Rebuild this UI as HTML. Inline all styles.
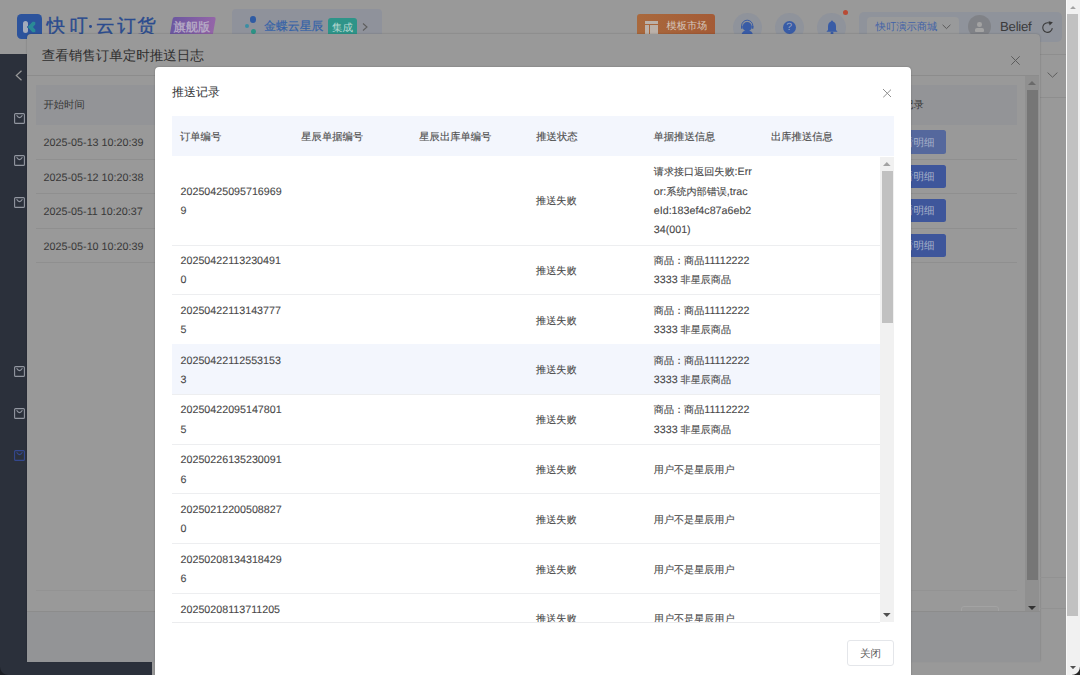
<!DOCTYPE html>
<html><head><meta charset="utf-8">
<style>
*{margin:0;padding:0;box-sizing:border-box}
html,body{width:1080px;height:675px;overflow:hidden}
body{position:relative;background:#999;font-family:"Liberation Sans",sans-serif;color:#333;text-rendering:geometricPrecision}
.a{position:absolute}
.t{position:absolute;white-space:nowrap;line-height:1}
.brand{top:17px;font-size:18.5px;-webkit-text-stroke:.4px #2a4b8e;color:#2a4b8e}
.m1d{font-size:10.75px;color:#383838}
#tb{position:absolute;left:172px;top:156.5px;width:708px;height:465.5px;overflow:hidden}
.r{display:flex;border-bottom:1px solid #edeef0;background:#fff}
.r.hov{background:#f3f6fd}
.r.pre{border-bottom-color:#f3f6fd}
.z{font-size:10.1px}
.in{position:relative;top:1.6px}
.c{width:118px;padding:0 9px 0 8.6px;line-height:19.35px;font-size:10.7px;color:#484848;-webkit-text-stroke:.1px #484848;display:flex;flex-direction:column;justify-content:center;white-space:nowrap}
.hc{position:absolute;top:132.6px;font-size:10.3px;-webkit-text-stroke:.15px #555;line-height:1;color:#505050;white-space:nowrap}
</style></head>
<body>
<!-- ===== base page (dimmed) ===== -->
<div class="a" id="hdr" style="left:0;top:0;width:1066px;height:54px;background:#999"></div>
<!-- logo -->
<div class="a" style="left:17px;top:14.2px;width:25.3px;height:25px;border-radius:4.5px;background:#2c539c"></div>
<div class="a" style="left:22.9px;top:20.8px;width:5.4px;height:12.1px;border-radius:2.7px;background:#a4abbb"></div>
<svg class="a" style="left:25px;top:20px" width="13" height="14" viewBox="0 0 13 14"><path d="M9 1.2 Q11.8 1.8 10.6 4.6 L8.4 7 L10.6 9.4 Q11.8 12.2 9 12.8 Q7.6 12.9 6.4 11.4 L2.2 7 L6.4 2.6 Q7.6 1.1 9 1.2Z" fill="#2a8a96" stroke="#2c539c" stroke-width=".8"/></svg>
<div class="t brand" style="left:46.5px">快</div>
<div class="t brand" style="left:69.2px">叮</div>
<div class="t brand" style="left:96.1px">云</div>
<div class="t brand" style="left:117.3px">订</div>
<div class="t brand" style="left:137.2px">货</div>
<div class="a" style="left:89.2px;top:25.2px;width:2.8px;height:2.8px;border-radius:50%;background:#2a4b8e"></div>
<div class="a" style="left:170.5px;top:16.8px;width:43px;height:22px;background:linear-gradient(90deg,#6c57a0,#9465a8);transform:skewX(-10deg);border-radius:2px"></div>
<div class="t" style="left:173.6px;top:21px;font-size:12.2px;-webkit-text-stroke:.3px #b8aec6;color:#b8aec6">旗舰版</div>
<!-- kingdee pill -->
<div class="a" style="left:232px;top:9.4px;width:150px;height:30px;border-radius:4px;background:#8f929b"></div>
<div class="a" style="left:249.9px;top:16.1px;width:6.6px;height:6.6px;border-radius:50%;background:#2f5ba3"></div>
<div class="a" style="left:244.8px;top:24.2px;width:4px;height:4px;border-radius:50%;background:#3a8ea3"></div>
<div class="a" style="left:250.8px;top:28.7px;width:5.4px;height:5.4px;border-radius:50%;background:#2b9385"></div>
<div class="t" style="left:264px;top:20.6px;font-size:11.9px;-webkit-text-stroke:.2px #3462a8;color:#3462a8">金蝶云星辰</div>
<div class="a" style="left:328.3px;top:17.6px;width:28.3px;height:20px;border-radius:3px;background:#2e9489"></div>
<div class="t" style="left:332px;top:22.5px;font-size:10.5px;color:#b9d9d2">集成</div>
<svg class="a" style="left:361.5px;top:22.5px" width="6" height="8" viewBox="0 0 6 8"><path d="M1 .5L5 4L1 7.5" fill="none" stroke="#5e5e5e" stroke-width="1.1"/></svg>
<!-- orange btn -->
<div class="a" style="left:637.1px;top:14px;width:78.3px;height:26px;border-radius:3px;background:linear-gradient(90deg,#a9693d,#a45b36)"></div>
<div class="a" style="left:645.4px;top:20.9px;width:12.5px;height:2.9px;background:#bbb1a9"></div>
<div class="a" style="left:645.4px;top:24.6px;width:3.2px;height:10px;background:#bbb1a9"></div>
<div class="a" style="left:649.6px;top:24.6px;width:8.3px;height:10px;background:#bbb1a9"></div>
<div class="t" style="left:666.5px;top:22.3px;font-size:10.2px;color:#d5c7bd">模板市场</div>
<!-- circles -->
<div class="a" style="left:732.8px;top:12.8px;width:28.8px;height:28.8px;border-radius:50%;background:#8f939b"></div>
<div class="a" style="left:774.9px;top:12.8px;width:28.8px;height:28.8px;border-radius:50%;background:#8f939b"></div>
<div class="a" style="left:817px;top:12.8px;width:28.8px;height:28.8px;border-radius:50%;background:#8f939b"></div>
<svg class="a" style="left:739px;top:19px" width="17" height="16" viewBox="0 0 17 16"><circle cx="8.2" cy="7.7" r="4.6" fill="#395ca6"/><path d="M2.6 8.5 V6.8 A5.6 5.6 0 0 1 13.8 6.8 V8.5" fill="none" stroke="#395ca6" stroke-width="1"/><rect x="2" y="6.8" width="1.6" height="3" rx=".6" fill="#395ca6"/><rect x="12.8" y="6.8" width="1.6" height="3" rx=".6" fill="#395ca6"/><path d="M2.5 16 Q3 11.6 8.2 11.6 Q13.4 11.6 13.9 16Z" fill="#395ca6"/></svg>
<div class="a" style="left:782.8px;top:20.5px;width:13px;height:13px;border-radius:50%;background:#395ca6"></div>
<div class="t" style="left:786.2px;top:22px;font-size:10.5px;color:#9aa6c2">?</div>
<svg class="a" style="left:825.5px;top:20px" width="12" height="15" viewBox="0 0 12 15"><path d="M6 .6 Q6.9 .6 7 1.6 Q10 2.6 10 6.5 V10 L11.6 11.8 H.4 L2 10 V6.5 Q2 2.6 5 1.6 Q5.1 .6 6 .6Z" fill="#395ca6"/><circle cx="6" cy="13" r="1.5" fill="#395ca6"/></svg>
<div class="a" style="left:842.7px;top:10.2px;width:5.2px;height:5.2px;border-radius:50%;background:#b84b35"></div>
<!-- user pill -->
<div class="a" style="left:859.3px;top:12.2px;width:203px;height:29.5px;border-radius:5px;background:#8f939b"></div>
<div class="a" style="left:867.4px;top:17px;width:91.9px;height:22px;border-radius:4px;background:#999a9b"></div>
<div class="t" style="left:875.6px;top:23px;font-size:10.3px;color:#4262a8">快叮演示商城</div>
<svg class="a" style="left:941.5px;top:24px" width="9" height="6" viewBox="0 0 9 6"><path d="M.6 .8L4.5 4.6L8.4 .8" fill="none" stroke="#5a5a5a" stroke-width="1"/></svg>
<div class="a" style="left:968.1px;top:14.7px;width:23px;height:23px;border-radius:50%;background:#808287"></div>
<div class="a" style="left:977.3px;top:22px;width:4.6px;height:4.6px;border-radius:50%;background:#a3a3a3"></div>
<div class="a" style="left:974.6px;top:27.9px;width:9.7px;height:3.8px;border-radius:2px 2px 1px 1px;background:#a3a3a3"></div>
<div class="t" style="left:1000px;top:20.2px;font-size:13.2px;letter-spacing:-.25px;color:#3b3b3b">Belief</div>
<svg class="a" style="left:1040.5px;top:20.5px" width="13" height="13" viewBox="0 0 13 13"><path d="M11.3 7.2 A4.8 4.8 0 1 1 8.4 2.1" fill="none" stroke="#3a3a3a" stroke-width="1.1"/><path d="M7.6 .2 L11.9 1.2 L8.6 4.4Z" fill="#3a3a3a"/></svg>

<!-- sidebar -->
<div class="a" id="side" style="left:0;top:54px;width:152px;height:621px;background:#2b303b"></div>
<svg class="a" style="left:14px;top:112.7px" width="11" height="11" viewBox="0 0 11 11"><rect x="0.6" y="0.6" width="9.8" height="9.8" rx="1" fill="none" stroke="#9296a0" stroke-width="1.1"/><path d="M2.6 2.3 Q5.5 7 8.4 2.3" fill="none" stroke="#9296a0" stroke-width="1.1"/></svg>
<svg class="a" style="left:14px;top:155.1px" width="11" height="11" viewBox="0 0 11 11"><rect x="0.6" y="0.6" width="9.8" height="9.8" rx="1" fill="none" stroke="#9296a0" stroke-width="1.1"/><path d="M2.6 2.3 Q5.5 7 8.4 2.3" fill="none" stroke="#9296a0" stroke-width="1.1"/></svg>
<svg class="a" style="left:14px;top:196.9px" width="11" height="11" viewBox="0 0 11 11"><rect x="0.6" y="0.6" width="9.8" height="9.8" rx="1" fill="none" stroke="#9296a0" stroke-width="1.1"/><path d="M2.6 2.3 Q5.5 7 8.4 2.3" fill="none" stroke="#9296a0" stroke-width="1.1"/></svg>
<svg class="a" style="left:14px;top:365.7px" width="11" height="11" viewBox="0 0 11 11"><rect x="0.6" y="0.6" width="9.8" height="9.8" rx="1" fill="none" stroke="#9296a0" stroke-width="1.1"/><path d="M2.6 2.3 Q5.5 7 8.4 2.3" fill="none" stroke="#9296a0" stroke-width="1.1"/></svg>
<svg class="a" style="left:14px;top:407.8px" width="11" height="11" viewBox="0 0 11 11"><rect x="0.6" y="0.6" width="9.8" height="9.8" rx="1" fill="none" stroke="#9296a0" stroke-width="1.1"/><path d="M2.6 2.3 Q5.5 7 8.4 2.3" fill="none" stroke="#9296a0" stroke-width="1.1"/></svg>
<svg class="a" style="left:14px;top:450.1px" width="11" height="11" viewBox="0 0 11 11"><rect x="0.6" y="0.6" width="9.8" height="9.8" rx="1" fill="none" stroke="#34488f" stroke-width="1.1"/><path d="M2.6 2.3 Q5.5 7 8.4 2.3" fill="none" stroke="#34488f" stroke-width="1.1"/></svg>
<svg class="a" style="left:15px;top:69.5px" width="8" height="11" viewBox="0 0 8 11"><path d="M6.5 .8L1.3 5.5L6.5 10.2" fill="none" stroke="#9a9a9a" stroke-width="1.2"/></svg>
<svg class="a" style="left:1047px;top:72px" width="11" height="6" viewBox="0 0 11 6"><path d="M.6 .6L5.5 5.2L10.4 .6" fill="none" stroke="#5e5e5e" stroke-width="1"/></svg>
<div class="a" style="left:1039px;top:54px;width:27px;height:1px;background:#8e8e8e"></div>
<div class="a" style="left:1039px;top:97px;width:27px;height:1px;background:#8e8e8e"></div>

<!-- ===== modal 1 ===== -->
<div class="a" id="m1" style="left:27px;top:33.6px;width:1012.5px;height:627.9px;background:#999;border-radius:4px 4px 0 0;box-shadow:0 0 2px rgba(0,0,0,.25)"></div>
<div class="t" style="left:41.8px;top:49px;font-size:13.5px;color:#2e2e2e">查看销售订单定时推送日志</div>
<div class="a" style="left:27px;top:75px;width:1012px;height:1px;background:#8c8c8c"></div>
<svg class="a" style="left:1010.8px;top:55.5px" width="9" height="9" viewBox="0 0 9 9"><path d="M.3 .3L8.7 8.7M8.7 .3L.3 8.7" stroke="#5c5c5c" stroke-width="1"/></svg>
<div class="a" style="left:35.5px;top:84.5px;width:981.5px;height:40px;background:#939497"></div>
<div class="t" style="left:43.5px;top:100.5px;font-size:10.3px;color:#383838">开始时间</div>
<div class="t" style="left:882.6px;top:101px;font-size:10.3px;color:#383838">推送记录</div>
<div class="a" style="left:35.5px;top:159.1px;width:981.5px;height:1px;background:#8f8f8f"></div>
<div class="t m1d" style="left:43.6px;top:138.35000000000002px">2025-05-13 10:20:39</div>
<div class="a" style="left:881.5px;top:130.45000000000002px;width:64.3px;height:23.3px;border-radius:2.5px;background:#55689d"></div>
<div class="t" style="left:892.5px;top:137.65px;font-size:10.5px;color:#a9b2ca">查看明细</div>
<div class="a" style="left:35.5px;top:192.8px;width:981.5px;height:1px;background:#8f8f8f"></div>
<div class="t m1d" style="left:43.6px;top:172.75px">2025-05-12 10:20:38</div>
<div class="a" style="left:881.5px;top:164.85px;width:64.3px;height:23.3px;border-radius:2.5px;background:#3e569b"></div>
<div class="t" style="left:892.5px;top:172.04999999999998px;font-size:10.5px;color:#a9b2ca">查看明细</div>
<div class="a" style="left:35.5px;top:227.7px;width:981.5px;height:1px;background:#8f8f8f"></div>
<div class="t m1d" style="left:43.6px;top:207.05px">2025-05-11 10:20:37</div>
<div class="a" style="left:881.5px;top:199.15px;width:64.3px;height:23.3px;border-radius:2.5px;background:#3e569b"></div>
<div class="t" style="left:892.5px;top:206.35px;font-size:10.5px;color:#a9b2ca">查看明细</div>
<div class="a" style="left:35.5px;top:261.7px;width:981.5px;height:1px;background:#8f8f8f"></div>
<div class="t m1d" style="left:43.6px;top:241.5px">2025-05-10 10:20:39</div>
<div class="a" style="left:881.5px;top:233.6px;width:64.3px;height:23.3px;border-radius:2.5px;background:#3e569b"></div>
<div class="t" style="left:892.5px;top:240.79999999999998px;font-size:10.5px;color:#a9b2ca">查看明细</div>
<div class="a" style="left:35.5px;top:590px;width:981.5px;height:1px;background:#939393"></div>
<!-- modal 1 scrollbar -->
<div class="a" style="left:1025.3px;top:75.5px;width:14px;height:536px;background:#909090"></div>
<div class="a" style="left:1027px;top:90.4px;width:11px;height:489.6px;background:#767676"></div>
<svg class="a" style="left:1028.3px;top:81px" width="8" height="4" viewBox="0 0 8 4"><path d="M0 4L4 0L8 4Z" fill="#6a6a6a"/></svg>
<svg class="a" style="left:1028.3px;top:606.3px" width="8" height="4" viewBox="0 0 8 4"><path d="M0 0L4 4L8 0Z" fill="#333"/></svg>
<div class="a" style="left:1039.5px;top:577px;width:26px;height:1px;background:#929292"></div>
<div class="a" style="left:1039.5px;top:607.5px;width:26px;height:1px;background:#929292"></div>
<div class="a" style="left:960.5px;top:605.8px;width:38px;height:12px;border:1px solid #a3a3a3;border-radius:3px"></div>

<!-- modal 1 footer -->
<div class="a" style="left:27px;top:611px;width:1012.5px;height:50.5px;background:#939496;border-top:1px solid #8c8c8c"></div>

<!-- browser scrollbar -->
<div class="a" style="left:1066px;top:0;width:14px;height:675px;background:#f1f1f1"></div>
<div class="a" style="left:1067.1px;top:14px;width:10.9px;height:601.5px;background:#c1c1c1"></div>
<div class="a" style="left:1066px;top:0;width:1.2px;height:675px;background:#fafafa"></div>
<svg class="a" style="left:1069.8px;top:6px" width="6" height="3.2" viewBox="0 0 8 4"><path d="M0 4L4 0L8 4Z" fill="#a3a3a3"/></svg>
<svg class="a" style="left:1069.8px;top:665.5px" width="6" height="3.2" viewBox="0 0 8 4"><path d="M0 0L4 4L8 0Z" fill="#505050"/></svg>

<!-- ===== modal 2 ===== -->
<div class="a" id="m2" style="left:155.3px;top:67.4px;width:755.7px;height:640px;background:#fff;border-radius:4px;box-shadow:0 0 1.5px rgba(0,0,0,.35)"></div>
<div class="t" style="left:172px;top:86px;font-size:12px;color:#303133">推送记录</div>
<svg class="a" style="left:882.7px;top:89.2px" width="8.6" height="8.6" viewBox="0 0 8.6 8.6"><path d="M0 0L8.6 8.6M8.6 0L0 8.6" stroke="#8e8e8e" stroke-width="1"/></svg>
<div class="a" style="left:172px;top:116.2px;width:722px;height:40.3px;background:#f3f6fd"></div>
<div class="hc" style="left:180px">订单编号</div>
<div class="hc" style="left:301.3px">星辰单据编号</div>
<div class="hc" style="left:419.3px">星辰出库单编号</div>
<div class="hc" style="left:536.3px">推送状态</div>
<div class="hc" style="left:653.5px">单据推送信息</div>
<div class="hc" style="left:771px">出库推送信息</div>
<div id="tb">
<div class="r" style="height:89px"><div class="c"><div class="in">20250425095716969<br>9</div></div><div class="c"></div><div class="c"></div><div class="c" style="padding-left:10.1px"><div class="in"><span class="z">推送失败</span></div></div><div class="c" style="padding-left:9.8px"><div class="in"><span class="z">请求接口返回失败</span>:Err<br>or:<span class="z">系统内部错误</span>,trac<br>eId:183ef4c87a6eb2<br>34(001)</div></div><div class="c"></div></div>
<div class="r" style="height:49.79px"><div class="c"><div class="in">20250422113230491<br>0</div></div><div class="c"></div><div class="c"></div><div class="c" style="padding-left:10.1px"><div class="in"><span class="z">推送失败</span></div></div><div class="c" style="padding-left:9.8px"><div class="in"><span class="z">商品：商品</span>11112222<br>3333 <span class="z">非星辰商品</span></div></div><div class="c"></div></div>
<div class="r pre" style="height:49.79px"><div class="c"><div class="in">20250422113143777<br>5</div></div><div class="c"></div><div class="c"></div><div class="c" style="padding-left:10.1px"><div class="in"><span class="z">推送失败</span></div></div><div class="c" style="padding-left:9.8px"><div class="in"><span class="z">商品：商品</span>11112222<br>3333 <span class="z">非星辰商品</span></div></div><div class="c"></div></div>
<div class="r hov" style="height:49.79px"><div class="c"><div class="in">20250422112553153<br>3</div></div><div class="c"></div><div class="c"></div><div class="c" style="padding-left:10.1px"><div class="in"><span class="z">推送失败</span></div></div><div class="c" style="padding-left:9.8px"><div class="in"><span class="z">商品：商品</span>11112222<br>3333 <span class="z">非星辰商品</span></div></div><div class="c"></div></div>
<div class="r" style="height:49.79px"><div class="c"><div class="in">20250422095147801<br>5</div></div><div class="c"></div><div class="c"></div><div class="c" style="padding-left:10.1px"><div class="in"><span class="z">推送失败</span></div></div><div class="c" style="padding-left:9.8px"><div class="in"><span class="z">商品：商品</span>11112222<br>3333 <span class="z">非星辰商品</span></div></div><div class="c"></div></div>
<div class="r" style="height:49.79px"><div class="c"><div class="in">20250226135230091<br>6</div></div><div class="c"></div><div class="c"></div><div class="c" style="padding-left:10.1px"><div class="in"><span class="z">推送失败</span></div></div><div class="c" style="padding-left:9.8px"><div class="in"><span class="z">用户不是星辰用户</span></div></div><div class="c"></div></div>
<div class="r" style="height:49.79px"><div class="c"><div class="in">20250212200508827<br>0</div></div><div class="c"></div><div class="c"></div><div class="c" style="padding-left:10.1px"><div class="in"><span class="z">推送失败</span></div></div><div class="c" style="padding-left:9.8px"><div class="in"><span class="z">用户不是星辰用户</span></div></div><div class="c"></div></div>
<div class="r" style="height:49.79px"><div class="c"><div class="in">20250208134318429<br>6</div></div><div class="c"></div><div class="c"></div><div class="c" style="padding-left:10.1px"><div class="in"><span class="z">推送失败</span></div></div><div class="c" style="padding-left:9.8px"><div class="in"><span class="z">用户不是星辰用户</span></div></div><div class="c"></div></div>
<div class="r" style="height:49.79px"><div class="c"><div class="in">20250208113711205<br>2</div></div><div class="c"></div><div class="c"></div><div class="c" style="padding-left:10.1px"><div class="in"><span class="z">推送失败</span></div></div><div class="c" style="padding-left:9.8px"><div class="in"><span class="z">用户不是星辰用户</span></div></div><div class="c"></div></div>
</div>
<div class="a" style="left:172px;top:622px;width:708px;height:1px;background:#ebecee"></div>
<!-- modal 2 scrollbar -->
<div class="a" style="left:880.2px;top:156.5px;width:13.8px;height:465.5px;background:#f1f1f1"></div>
<div class="a" style="left:882px;top:171px;width:11px;height:152px;background:#c1c1c1"></div>
<svg class="a" style="left:883.2px;top:162.3px" width="7.6" height="4" viewBox="0 0 8 4"><path d="M0 4L4 0L8 4Z" fill="#a3a3a3"/></svg>
<svg class="a" style="left:883.2px;top:612.6px" width="7.6" height="4" viewBox="0 0 8 4"><path d="M0 0L4 4L8 0Z" fill="#505050"/></svg>

<!-- close btn -->
<div class="a" style="left:847.4px;top:639.6px;width:46.4px;height:26.2px;border:1px solid #e4e6ea;border-radius:3px"></div>
<div class="t" style="left:860px;top:648.8px;font-size:10.5px;color:#5a5a5a">关闭</div>
<div class="a" style="left:1072px;top:667px;width:8px;height:8px;background:radial-gradient(circle at 0 0,rgba(0,0,0,0) 7.3px,#262626 8.3px)"></div>
<div class="a" style="left:0;top:667px;width:8px;height:8px;background:radial-gradient(circle at 100% 0,rgba(0,0,0,0) 7.3px,#1c1f26 8.3px)"></div>
</body></html>
